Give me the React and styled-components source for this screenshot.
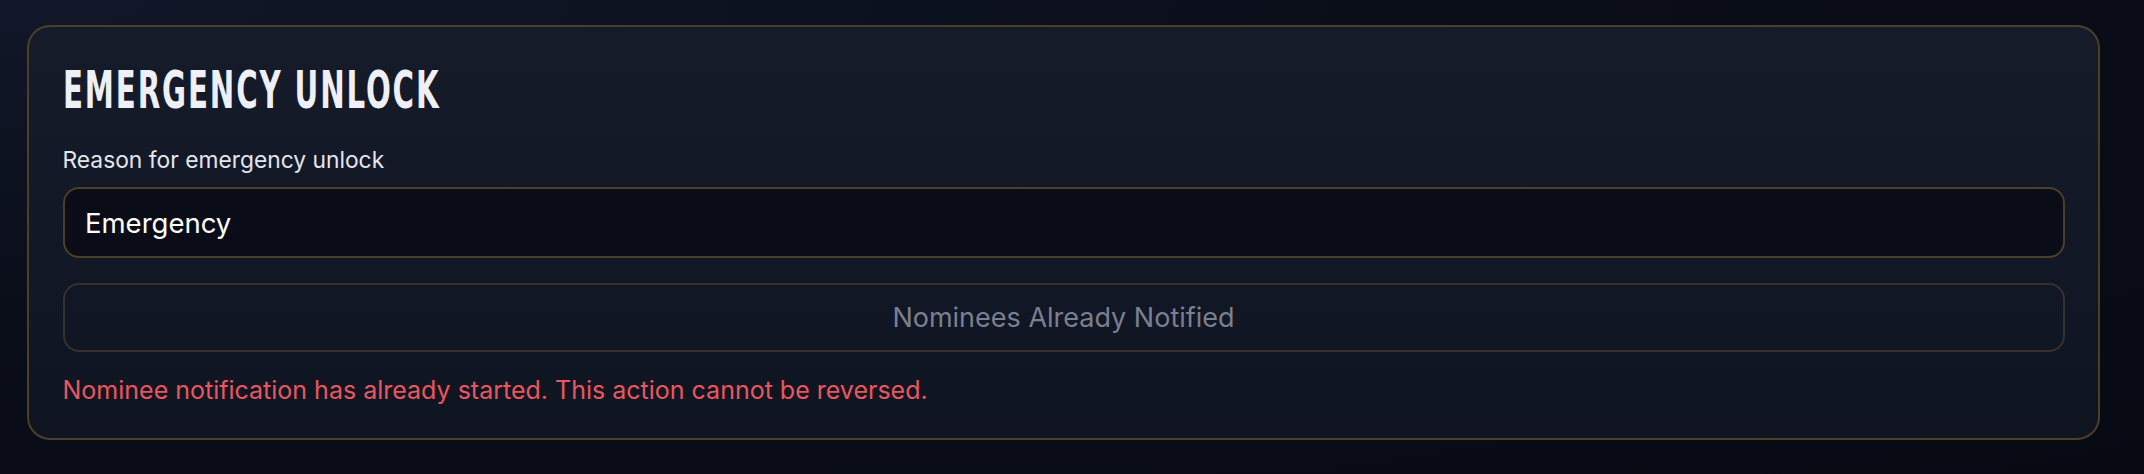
import React from "react";
import styled, { createGlobalStyle } from "styled-components";

const Global = createGlobalStyle`
  html, body { margin: 0; padding: 0; }
  body {
    width: 2144px;
    height: 474px;
    overflow: hidden;
    background: radial-gradient(ellipse at 0% 0%, #111729 0%, #0a0e19 45%, #070a13 100%);
    font-family: Inter, "Noto Sans", sans-serif;
  }
`;

const Page = styled.div`
  box-sizing: border-box;
  padding: 25px 44px 0 27px;
`;

const Card = styled.section`
  box-sizing: border-box;
  width: 2073px;
  height: 415px;
  border: 2px solid #4c3f29;
  border-radius: 23px;
  background: linear-gradient(180deg, #161b2a 0%, #121726 60%, #0f1420 100%);
  padding: 35px 33.5px 0 33.5px;
  display: flex;
  flex-direction: column;
`;

const Title = styled.h2`
  margin: 0;
  height: 56px;
  font-family: "Liberation Sans Narrow", "DejaVu Sans Condensed", "Liberation Sans", sans-serif;
  font-weight: 700;
  font-size: 52px;
  line-height: 56px;
  letter-spacing: 3px;
  color: #eef0f6;
  text-transform: uppercase;
  transform-origin: left center;
  transform: scaleX(0.625);
  white-space: nowrap;
`;

const Label = styled.label`
  margin-top: 27px;
  font-size: 22.8px;
  line-height: 30px;
  color: #e3e6ee;
`;

const Input = styled.input`
  box-sizing: border-box;
  margin-top: 12px;
  width: 100%;
  height: 71px;
  border: 2px solid #4c3f29;
  border-radius: 16px;
  background: #0a0d17;
  padding: 0 20.5px;
  font-family: Inter, sans-serif;
  font-size: 27.5px;
  color: #ffffff;
  outline: none;
`;

const Button = styled.button`
  box-sizing: border-box;
  margin-top: 25px;
  width: 100%;
  height: 69px;
  border: 2px solid #35322d;
  border-radius: 16px;
  background: transparent;
  font-family: Inter, sans-serif;
  font-size: 27px;
  color: #7b7f8f;
  cursor: not-allowed;
`;

const Warning = styled.p`
  margin: 22px 0 0 0;
  font-size: 25px;
  line-height: 33px;
  color: #ea5660;
`;

export default function App() {
  return (
    <>
      <Global />
      <Page>
        <Card>
          <Title>Emergency Unlock</Title>
          <Label htmlFor="reason">Reason for emergency unlock</Label>
          <Input id="reason" defaultValue="Emergency" />
          <Button disabled>Nominees Already Notified</Button>
          <Warning>Nominee notification has already started. This action cannot be reversed.</Warning>
        </Card>
      </Page>
    </>
  );
}
